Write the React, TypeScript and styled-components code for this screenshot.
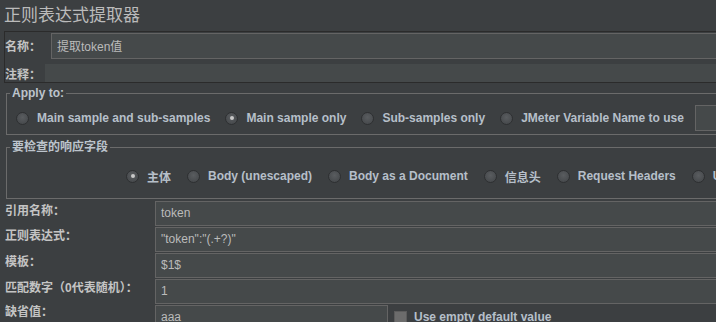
import React from "react";
import styled, { createGlobalStyle } from "styled-components";

const FONT = `"Liberation Sans", "Noto Sans CJK SC", sans-serif`;

const Global = createGlobalStyle`
  html, body { margin: 0; padding: 0; background: #3c3f41; overflow: hidden; }
  * { box-sizing: border-box; }
`;

const Viewport = styled.div`
  width: 716px;
  height: 322px;
  overflow: hidden;
  background: #3c3f41;
  font-family: ${FONT};
`;

const Page = styled.div`
  width: 760px;
  display: flex;
  flex-direction: column;
`;

const Title = styled.div`
  height: 31px;
  padding-left: 4px;
  font-family: "Noto Sans CJK SC", sans-serif;
  font-size: 17px;
  line-height: 27px;
  color: #bbbbbb;
`;

const NamePanel = styled.div`
  margin-left: 4px;
  height: 52px;
  border: 1px solid #2b2b2b;
  border-right: none;
  display: flex;
  flex-direction: column;
`;

const PanelRow = styled.div<{ $h: number; $mt?: number }>`
  height: ${(p) => p.$h}px;
  margin-top: ${(p) => p.$mt ?? 0}px;
  display: flex;
  align-items: flex-end;
`;

const Label = styled.span<{ $w?: number }>`
  flex: none;
  width: ${(p) => (p.$w ? `${p.$w}px` : "auto")};
  align-self: center;
  font-size: 12px;
  font-weight: bold;
  color: #c4c4c4;
  white-space: nowrap;
`;

const FormLabel = styled.span<{ $dy: number }>`
  flex: none;
  width: 150px;
  align-self: flex-start;
  margin-top: ${(p) => p.$dy}px;
  font-size: 12px;
  font-weight: bold;
  line-height: 16px;
  color: #c4c4c4;
  white-space: nowrap;
`;

const TextField = styled.input<{ $h: number; $w?: number; $bordered?: boolean }>`
  flex: ${(p) => (p.$w ? "none" : "1")};
  width: ${(p) => (p.$w ? `${p.$w}px` : "auto")};
  min-width: 0;
  height: ${(p) => p.$h}px;
  margin: 0;
  padding: 0 0 1px 5px;
  background: #45494a;
  border: ${(p) => (p.$bordered === false ? "none" : "1px solid #646464")};
  color: #bbbbbb;
  font-family: ${FONT};
  font-size: 12px;
  outline: none;
`;

const Group = styled.fieldset<{ $mt: number; $pb: number }>`
  margin: ${(p) => p.$mt}px 0 0 6px;
  padding: 0 0 ${(p) => p.$pb}px 0;
  border: 1px solid #6b6b6b;
  border-right: none;
  min-inline-size: 0;
`;

const Legend = styled.legend`
  margin-left: 3px;
  padding: 0 2px;
  font-size: 12px;
  font-weight: bold;
  line-height: 14px;
  color: #bcc4cc;
  white-space: nowrap;
`;

const RadioRow = styled.div<{ $h: number; $gap: number; $pl: number; $mt: number }>`
  height: ${(p) => p.$h}px;
  margin-top: ${(p) => p.$mt}px;
  padding-left: ${(p) => p.$pl}px;
  display: flex;
  align-items: center;
  gap: ${(p) => p.$gap}px;
  white-space: nowrap;
`;

const Option = styled.label`
  display: flex;
  align-items: center;
  gap: 8px;
  font-size: 12px;
  font-weight: bold;
  color: #b6bfc9;
  flex: none;
`;

const RadioDot = styled.span<{ $checked?: boolean }>`
  width: 13px;
  height: 13px;
  border-radius: 50%;
  flex: none;
  border: 1px solid #2e3032;
  background: radial-gradient(circle at 50% 40%, #5a5d60 0%, #4b4e51 60%, #424547 100%);
  display: flex;
  align-items: center;
  justify-content: center;
  &::after {
    content: "";
    display: ${(p) => (p.$checked ? "block" : "none")};
    width: 4px;
    height: 4px;
    border-radius: 50%;
    background: #c8c8c8;
  }
`;

const VarInput = styled.div`
  flex: none;
  width: 80px;
  height: 26px;
  margin-left: -4px;
  background: #45494a;
  border: 1px solid #646464;
`;

const Form = styled.div`
  padding-top: 2px;
  display: flex;
  flex-direction: column;
  gap: 1px;
`;

const FormRow = styled.div`
  display: flex;
  align-items: center;
  height: 25px;
  padding-left: 5px;
`;

const Check = styled.span`
  width: 13px;
  height: 13px;
  flex: none;
  align-self: flex-start;
  margin: 6px 7px 0 6px;
  background: #6c6c6c;
  border: 1px solid #5c5c5c;
`;

const CheckLabel = styled.span`
  align-self: flex-start;
  margin-top: 4px;
  font-size: 12px;
  font-weight: bold;
  line-height: 16px;
  color: #b6bfc9;
  white-space: nowrap;
`;

type Opt = { label: string; checked?: boolean };

const applyOpts: Opt[] = [
  { label: "Main sample and sub-samples" },
  { label: "Main sample only", checked: true },
  { label: "Sub-samples only" },
  { label: "JMeter Variable Name to use" },
];

const fieldOpts: Opt[] = [
  { label: "主体", checked: true },
  { label: "Body (unescaped)" },
  { label: "Body as a Document" },
  { label: "信息头" },
  { label: "Request Headers" },
  { label: "URL" },
];

const rows = [
  { label: "引用名称：", value: "token", dy: 2 },
  { label: "正则表达式：", value: "\"token\":\"(.+?)\"", dy: 1 },
  { label: "模板：", value: "$1$", dy: 1 },
  { label: "匹配数字（0代表随机）：", value: "1", dy: 1 },
];

export default function App() {
  return (
    <Viewport>
      <Global />
      <Page>
        <Title>正则表达式提取器</Title>
        <NamePanel>
          <PanelRow $h={27}>
            <Label $w={46}>名称：</Label>
            <TextField $h={26} readOnly defaultValue="提取token值" />
          </PanelRow>
          <PanelRow $h={18} $mt={5}>
            <Label $w={40}>注释：</Label>
            <TextField $h={18} $bordered={false} readOnly defaultValue="" />
          </PanelRow>
        </NamePanel>

        <Group $mt={3} $pb={3}>
          <Legend>Apply to:</Legend>
          <RadioRow $h={26} $gap={15} $pl={9} $mt={5}>
            {applyOpts.map((o) => (
              <Option key={o.label}>
                <RadioDot $checked={o.checked} />
                {o.label}
              </Option>
            ))}
            <VarInput />
          </RadioRow>
        </Group>

        <Group $mt={5} $pb={14}>
          <Legend>要检查的响应字段</Legend>
          <RadioRow $h={16} $gap={16} $pl={119} $mt={14}>
            {fieldOpts.map((o) => (
              <Option key={o.label}>
                <RadioDot $checked={o.checked} />
                {o.label}
              </Option>
            ))}
          </RadioRow>
        </Group>

        <Form>
          {rows.map((r) => (
            <FormRow key={r.label}>
              <FormLabel $dy={r.dy}>{r.label}</FormLabel>
              <TextField $h={25} readOnly defaultValue={r.value} />
            </FormRow>
          ))}
          <FormRow>
            <FormLabel $dy={-1}>缺省值：</FormLabel>
            <TextField $h={25} $w={233} readOnly defaultValue="aaa" />
            <Check />
            <CheckLabel>Use empty default value</CheckLabel>
          </FormRow>
        </Form>
      </Page>
    </Viewport>
  );
}
